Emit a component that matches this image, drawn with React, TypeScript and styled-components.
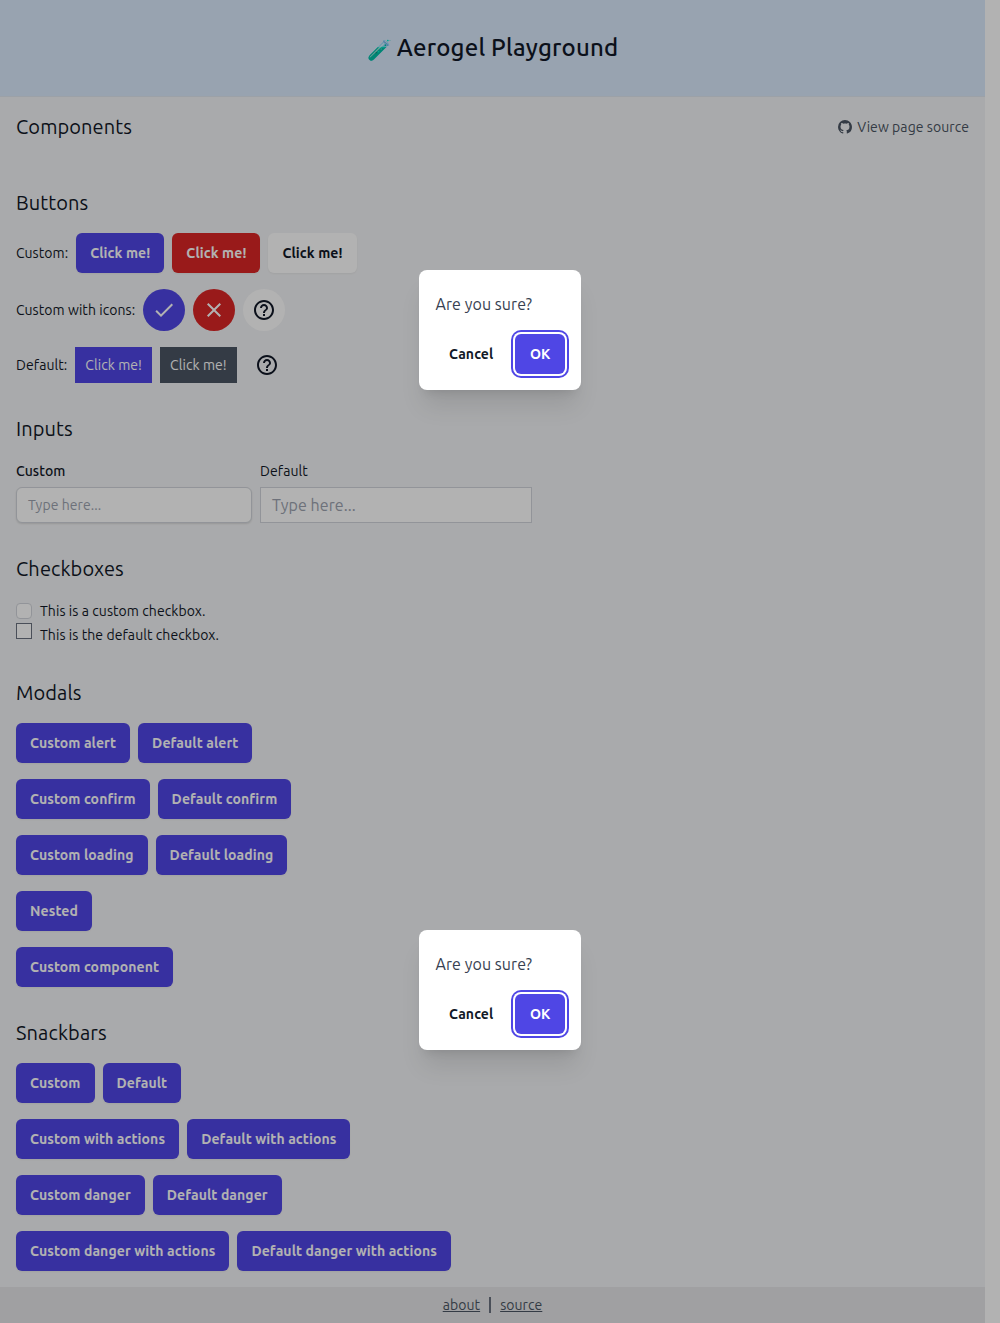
import React from 'react';
import styled, { createGlobalStyle } from 'styled-components';
import { MdCheck, MdClose, MdHelpOutline } from 'react-icons/md';
import { VscGithubInverted } from 'react-icons/vsc';

const Global = createGlobalStyle`
  *, *::before, *::after { box-sizing: border-box; }
  body {
    margin: 0;
    background: #fff;
    color: #111827;
    font-family: Ubuntu, 'Noto Sans', 'Open Sans', sans-serif;
    font-size: 14px;
    line-height: 20px;
    letter-spacing: 0.07px;
  }
  h1, h2, h3, p { margin: 0; font-weight: 400; }
  button { font: inherit; letter-spacing: inherit; border: 0; margin: 0; padding: 0; white-space: nowrap; }
`;

const Screen = styled.div`
  position: relative;
  width: 1000px;
  height: 1323px;
  overflow: hidden;
`;

const Page = styled.div`
  display: flex;
  flex-direction: column;
  width: 985px;
  height: 100%;
  background: #f3f4f6;
`;

const Header = styled.header`
  display: flex;
  flex: none;
  align-items: center;
  justify-content: center;
  height: 97px;
  background: #daeafd;
  border-bottom: 1px solid #e0e7ef;
`;

const Title = styled.h1`
  display: flex;
  align-items: center;
  gap: 5px;
  font-size: 24px;
  line-height: 32px;
  font-weight: 500;
  letter-spacing: 0.19px;
`;

const Emoji = styled.span`
  padding-top: 4px;
  font-size: 20px;
  line-height: 28px;
`;

const Main = styled.main`
  flex: 1;
  padding: 16px 16px 0;
`;

const TopRow = styled.div`
  display: flex;
  align-items: center;
  justify-content: space-between;
  margin-bottom: 48px;
`;

const Heading = styled.h2`
  font-size: 20px;
  line-height: 28px;
  letter-spacing: 0.1px;
`;

const SourceLink = styled.span`
  display: flex;
  align-items: center;
  gap: 5px;
  color: #4b5563;
`;

const Section = styled.section`
  display: flex;
  flex-direction: column;
  margin-bottom: 32px;

  &:last-child {
    margin-bottom: 0;
  }
`;

const Rows = styled.div<{ $gap?: number }>`
  display: flex;
  flex-direction: column;
  gap: ${(p) => p.$gap ?? 16}px;
  margin-top: 16px;
`;

const Row = styled.div`
  display: flex;
  align-items: center;
  gap: 8px;
`;

type Tone = 'primary' | 'danger' | 'plain' | 'clear';
const fills: Record<Tone, string> = { primary: '#4f46e5', danger: '#dc2626', plain: '#ffffff', clear: 'transparent' };
const inks: Record<Tone, string> = { primary: '#ffffff', danger: '#ffffff', plain: '#111827', clear: '#111827' };

const Button = styled.button<{ $tone?: Tone; $focus?: boolean }>`
  display: flex;
  flex: ${(p) => (p.$focus ? 1 : 'none')};
  align-items: center;
  justify-content: center;
  height: 40px;
  padding: 0 14px;
  border-radius: 6px;
  background: ${(p) => fills[p.$tone ?? 'primary']};
  color: ${(p) => inks[p.$tone ?? 'primary']};
  font-weight: 700;
  letter-spacing: 0.1px;
  box-shadow: ${(p) =>
    p.$focus ? '0 0 0 2px #fff, 0 0 0 4px #4f46e5' : p.$tone === 'clear' ? 'none' : '0 1px 2px rgba(0, 0, 0, 0.05)'};
`;

const RoundButton = styled.button<{ $tone: Tone }>`
  display: flex;
  align-items: center;
  justify-content: center;
  width: 42px;
  height: 42px;
  border-radius: 50%;
  background: ${(p) => fills[p.$tone]};
  color: ${(p) => inks[p.$tone]};
`;

const FlatButton = styled.button<{ $fill: string }>`
  display: flex;
  align-items: center;
  height: 36px;
  padding: 0 10px;
  background: ${(p) => p.$fill};
  color: #fff;
`;

const BareIcon = styled.button`
  display: flex;
  align-items: center;
  justify-content: center;
  width: 44px;
  height: 36px;
  background: transparent;
  color: #111827;
`;

const Field = styled.label<{ $bold?: boolean }>`
  display: flex;
  flex-direction: column;
  gap: 6px;
  padding-top: 2px;
  font-weight: ${(p) => (p.$bold ? 500 : 400)};
`;

const InputBox = styled.span<{ $custom?: boolean }>`
  display: flex;
  align-items: center;
  width: ${(p) => (p.$custom ? 236 : 272)}px;
  height: 36px;
  padding: 0 11px;
  background: #fff;
  border: 1px solid #d1d5db;
  border-radius: ${(p) => (p.$custom ? 6 : 0)}px;
  box-shadow: ${(p) => (p.$custom ? '0 1px 2px rgba(0, 0, 0, 0.12)' : 'none')};
  color: #9ca3af;
  font-size: ${(p) => (p.$custom ? 14 : 16)}px;
  font-weight: 400;
`;

const CheckRow = styled.label<{ $top: number }>`
  display: flex;
  align-items: flex-start;
  gap: 8px;
  height: 24px;
  padding-top: ${(p) => p.$top}px;
`;

const CheckText = styled.span<{ $top: number }>`
  margin-top: ${(p) => p.$top}px;
`;

const Box = styled.span<{ $custom?: boolean }>`
  width: 16px;
  height: 16px;
  background: #fff;
  border: 1px solid ${(p) => (p.$custom ? '#d1d5db' : '#6b7280')};
  border-radius: ${(p) => (p.$custom ? 4 : 0)}px;
`;

const Footer = styled.footer`
  display: flex;
  flex: none;
  align-items: center;
  justify-content: center;
  gap: 9px;
  height: 36px;
  background: #e5e6e8;
  color: #4b5563;
`;

const FooterLink = styled.span`
  text-decoration: underline;
`;

const Divider = styled.span`
  width: 2px;
  height: 16px;
  background: #6b7280;
`;

const Overlay = styled.div`
  position: absolute;
  inset: 0;
  display: flex;
  flex-direction: column;
  align-items: center;
  gap: 540px;
  padding-top: 270px;
  background: rgba(0, 0, 0, 0.3);
`;

const Dialog = styled.div`
  display: flex;
  flex-direction: column;
  flex: none;
  gap: 18px;
  width: 162px;
  height: 120px;
  padding: 22px 16px 16px;
  background: #fff;
  border-radius: 8px;
  box-shadow: 0 20px 25px -5px rgba(0, 0, 0, 0.1), 0 8px 10px -6px rgba(0, 0, 0, 0.1);
`;

const Message = styled.p`
  padding-left: 0.5px;
  color: #374151;
  font-size: 16px;
  line-height: 24px;
`;

const modalRows = [
  ['Custom alert', 'Default alert'],
  ['Custom confirm', 'Default confirm'],
  ['Custom loading', 'Default loading'],
  ['Nested'],
  ['Custom component'],
];
const snackRows = [
  ['Custom', 'Default'],
  ['Custom with actions', 'Default with actions'],
  ['Custom danger', 'Default danger'],
  ['Custom danger with actions', 'Default danger with actions'],
];

function ButtonRows({ rows }: { rows: string[][] }) {
  return (
    <Rows>
      {rows.map((row) => (
        <Row key={row[0]}>
          {row.map((text) => (
            <Button key={text}>{text}</Button>
          ))}
        </Row>
      ))}
    </Rows>
  );
}

function Confirm() {
  return (
    <Dialog>
      <Message>Are you sure?</Message>
      <Row>
        <Button $tone="clear">Cancel</Button>
        <Button $focus>OK</Button>
      </Row>
    </Dialog>
  );
}

export default function App() {
  return (
    <Screen>
      <Global />
      <Page>
        <Header>
          <Title>
            <Emoji>🧪</Emoji>
            Aerogel Playground
          </Title>
        </Header>
        <Main>
          <TopRow>
            <Heading>Components</Heading>
            <SourceLink>
              <VscGithubInverted size={14} />
              View page source
            </SourceLink>
          </TopRow>

          <Section>
            <Heading>Buttons</Heading>
            <Rows>
              <Row>
                <span>Custom:</span>
                <Button>Click me!</Button>
                <Button $tone="danger">Click me!</Button>
                <Button $tone="plain">Click me!</Button>
              </Row>
              <Row>
                <span>Custom with icons:</span>
                <RoundButton $tone="primary">
                  <MdCheck size={24} />
                </RoundButton>
                <RoundButton $tone="danger">
                  <MdClose size={24} />
                </RoundButton>
                <RoundButton $tone="plain">
                  <MdHelpOutline size={24} />
                </RoundButton>
              </Row>
              <Row>
                <span>Default:</span>
                <FlatButton $fill="#4f46e5">Click me!</FlatButton>
                <FlatButton $fill="#4b5563">Click me!</FlatButton>
                <BareIcon>
                  <MdHelpOutline size={24} />
                </BareIcon>
              </Row>
            </Rows>
          </Section>

          <Section>
            <Heading>Inputs</Heading>
            <Rows>
              <Row>
                <Field $bold>
                  Custom
                  <InputBox $custom>Type here...</InputBox>
                </Field>
                <Field>
                  Default
                  <InputBox>Type here...</InputBox>
                </Field>
              </Row>
            </Rows>
          </Section>

          <Section>
            <Heading>Checkboxes</Heading>
            <Rows $gap={0}>
              <CheckRow $top={4}>
                <Box $custom />
                <CheckText $top={-2}>This is a custom checkbox.</CheckText>
              </CheckRow>
              <CheckRow $top={0}>
                <Box />
                <CheckText $top={2}>This is the default checkbox.</CheckText>
              </CheckRow>
            </Rows>
          </Section>

          <Section>
            <Heading>Modals</Heading>
            <ButtonRows rows={modalRows} />
          </Section>

          <Section>
            <Heading>Snackbars</Heading>
            <ButtonRows rows={snackRows} />
          </Section>
        </Main>
        <Footer>
          <FooterLink>about</FooterLink>
          <Divider />
          <FooterLink>source</FooterLink>
        </Footer>
      </Page>
      <Overlay>
        <Confirm />
        <Confirm />
      </Overlay>
    </Screen>
  );
}
